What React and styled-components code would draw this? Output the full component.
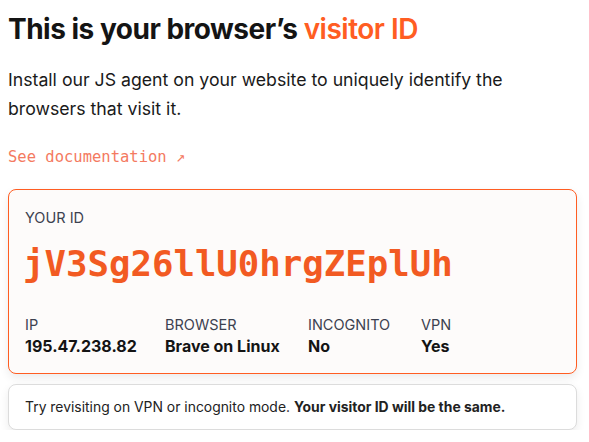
import React from 'react';
import styled, { createGlobalStyle } from 'styled-components';

const GlobalStyle = createGlobalStyle`
  body {
    margin: 0;
    background: #ffffff;
    font-family: Inter, "Noto Sans", sans-serif;
    color: #141414;
  }
`;

const Page = styled.div`
  padding: 8px 12px 0 8px;
  width: 589px;
  box-sizing: border-box;
`;

const Title = styled.h1`
  margin: 3px 0 0;
  font-size: 28px;
  line-height: 36px;
  font-weight: 700;
  letter-spacing: -0.5px;
`;

const Accent = styled.span`
  color: #ff5d22;
  font-weight: 600;
`;

const Intro = styled.p`
  margin: 18px 0 0;
  font-size: 17.7px;
  line-height: 29px;
  color: #1a1a1a;
`;

const DocLink = styled.a`
  display: inline-block;
  margin-top: 24px;
  font-family: "DejaVu Sans Mono", "Liberation Mono", monospace;
  font-size: 15.5px;
  line-height: 20px;
  color: #f47a61;
  text-decoration: none;
`;

const Card = styled.div`
  margin-top: 22px;
  border: 1px solid ${(p) => (p.$accent ? '#ff5d22' : '#dcdcdc')};
  border-radius: 8px;
  background: ${(p) => (p.$accent ? '#fdfbfa' : '#ffffff')};
  box-shadow: 0 4px 10px rgba(0, 0, 0, 0.08);
  padding: ${(p) => (p.$accent ? '18px 16px 17px' : '13px 16px 13px')};
`;

const NoteCard = styled(Card)`
  margin-top: 10px;
`;

const Label = styled.div`
  font-size: 14.5px;
  line-height: 20px;
  color: #3c4150;
  text-transform: uppercase;
`;

const VisitorId = styled.div`
  margin-top: 14px;
  margin-left: -2px;
  font-family: "DejaVu Sans Mono", "Liberation Mono", monospace;
  font-weight: 700;
  font-size: 35.7px;
  line-height: 44px;
  color: #f25a22;
`;

const Stats = styled.div`
  display: flex;
  margin-top: 29px;
`;

const Stat = styled.div`
  width: ${(p) => p.$w}px;
  flex: none;
`;

const Value = styled.div`
  margin-top: 1px;
  font-size: 16px;
  line-height: 20px;
  font-weight: 700;
  color: #141414;
`;

const Note = styled.div`
  font-size: 13.9px;
  line-height: 18px;
  color: #222;

  b {
    font-weight: 700;
  }
`;

const stats = [
  { label: 'IP', value: '195.47.238.82', w: 140 },
  { label: 'Browser', value: 'Brave on Linux', w: 143 },
  { label: 'Incognito', value: 'No', w: 113 },
  { label: 'VPN', value: 'Yes', w: 100 },
];

export default function App() {
  return (
    <Page>
      <GlobalStyle />
      <Title>
        This is your browser’s <Accent>visitor ID</Accent>
      </Title>
      <Intro>
        Install our JS agent on your website to uniquely identify the browsers that visit it.
      </Intro>
      <DocLink href="#">See documentation ↗</DocLink>
      <Card $accent>
        <Label>Your ID</Label>
        <VisitorId>jV3Sg26llU0hrgZEplUh</VisitorId>
        <Stats>
          {stats.map((s) => (
            <Stat key={s.label} $w={s.w}>
              <Label>{s.label}</Label>
              <Value>{s.value}</Value>
            </Stat>
          ))}
        </Stats>
      </Card>
      <NoteCard>
        <Note>
          Try revisiting on VPN or incognito mode. <b>Your visitor ID will be the same.</b>
        </Note>
      </NoteCard>
    </Page>
  );
}
